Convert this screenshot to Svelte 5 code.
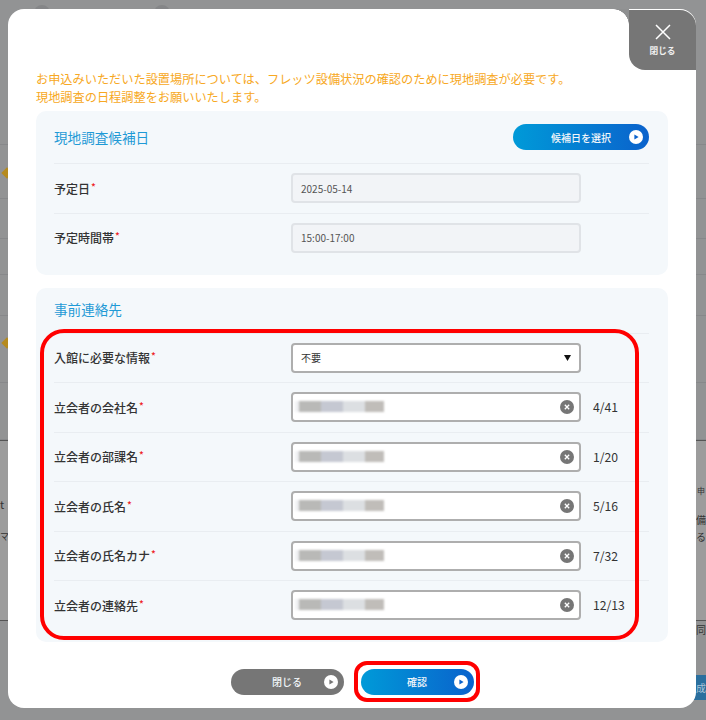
<script>
  const schedule = [
    { label: '予定日', value: '2025-05-14' },
    { label: '予定時間帯', value: '15:00-17:00' }
  ];
  const contacts = [
    { label: '立会者の会社名', count: '4/41' },
    { label: '立会者の部課名', count: '1/20' },
    { label: '立会者の氏名', count: '5/16' },
    { label: '立会者の氏名カナ', count: '7/32' },
    { label: '立会者の連絡先', count: '12/13' }
  ];
  const bgRows = [140, 54, 40, 36, 41, 67, 57];
</script>

{#snippet play(color)}
  <svg class="play" width="14" height="14" viewBox="0 0 14 14" aria-hidden="true">
    <circle cx="7" cy="7" r="7" fill="#fff" />
    <path d="M5.4 4.4v5.2L9.6 7z" fill={color} />
  </svg>
{/snippet}

<div class="backdrop" aria-hidden="true">
  <div class="bg-top">
    <span class="bump"></span>
    <span class="bump"></span>
  </div>
  {#each bgRows as h}
    <div class="bg-row" style="height: {h}px"></div>
  {/each}
  <div class="bg-lower"></div>
  <span class="diamond d1"></span>
  <span class="diamond d2"></span>
  <span class="frag" style="left: 0; top: 497px">t</span>
  <span class="frag" style="left: 0; top: 530px; font-size: 9px">マ:</span>
  <span class="frag" style="left: 697px; top: 484px; font-size: 8px">申</span>
  <span class="frag" style="left: 696px; top: 513px; font-size: 10px">備</span>
  <span class="frag" style="left: 696px; top: 530px; font-size: 10px">る</span>
  <span class="frag" style="left: 696px; top: 623px; font-size: 10px">同</span>
  <div class="bg-blue">成</div>
</div>

<div class="stage">
  <div class="modal">
    <button class="close-tab">
      <svg width="16" height="16" viewBox="0 0 16 16" aria-hidden="true">
        <path d="M1 1l14 14M15 1L1 15" stroke="#fff" stroke-width="1.5" fill="none" />
      </svg>
      <span>閉じる</span>
    </button>

    <p class="notice">
      お申込みいただいた設置場所については、フレッツ設備状況の確認のために現地調査が必要です。<br />
      現地調査の日程調整をお願いいたします。
    </p>

    <section class="panel">
      <div class="panel-head with-btn">
        <h2>現地調査候補日</h2>
        <button class="pill blue pick">
          <span></span>
          <span class="pill-text">候補日を選択</span>
          {@render play('#0a62cc')}
        </button>
      </div>
      {#each schedule as row}
        <div class="row">
          <div class="label">{row.label}<i>*</i></div>
          <div class="field readonly">{row.value}</div>
        </div>
      {/each}
    </section>

    <section class="panel second">
      <div class="panel-head">
        <h2>事前連絡先</h2>
      </div>
      <div class="row">
        <div class="label">入館に必要な情報<i>*</i></div>
        <div class="field select">
          <span>不要</span>
          <svg width="7" height="6" viewBox="0 0 7 6" aria-hidden="true"><path d="M0 0h7L3.5 6z" fill="#111" /></svg>
        </div>
      </div>
      {#each contacts as row}
        <div class="row">
          <div class="label">{row.label}<i>*</i></div>
          <div class="field">
            <div class="redact"><b></b><b></b><b></b><b></b></div>
            <svg class="clear" width="14" height="14" viewBox="0 0 14 14" aria-hidden="true">
              <circle cx="7" cy="7" r="7" fill="#767676" />
              <path d="M4.8 4.8l4.4 4.4M9.2 4.8L4.8 9.2" stroke="#fff" stroke-width="1.3" />
            </svg>
          </div>
          <div class="count">{row.count}</div>
        </div>
      {/each}
    </section>

    <div class="actions">
      <button class="pill gray">
        <span></span>
        <span class="pill-text">閉じる</span>
        {@render play('#767676')}
      </button>
      <button class="pill blue">
        <span></span>
        <span class="pill-text">確認</span>
        {@render play('#0a62cc')}
      </button>
    </div>

    <div class="mark mark-fields"></div>
    <div class="mark mark-confirm"></div>
  </div>
</div>

<style>
  :global(body) {
    margin: 0;
    background: #9a9a9b;
    font-family: "Noto Sans CJK JP", "Noto Sans", sans-serif;
  }
  .backdrop {
    position: absolute;
    inset: 0;
    height: 720px;
    overflow: hidden;
    background: #929394;
  }
  .bg-top {
    display: flex;
    gap: 104px;
    padding: 5px 0 0 34px;
    height: 0;
  }
  .bump {
    width: 16px;
    height: 16px;
    border-radius: 50%;
    background: #858688;
  }
  .bg-row {
    border-bottom: 1px solid #87888a;
    box-sizing: border-box;
  }
  .bg-lower {
    border-top: 1px solid #555;
    height: 179px;
    border-bottom: 1px solid #555;
    background: #9c9c9c;
  }
  .diamond {
    position: absolute;
    left: 3px;
    width: 8px;
    height: 8px;
    background: #b58a1e;
    transform: rotate(45deg);
  }
  .d1 { top: 169px; }
  .d2 { top: 339px; }
  .frag {
    position: absolute;
    font-size: 11px;
    line-height: 14px;
    color: #333;
    white-space: nowrap;
  }
  .bg-blue {
    position: absolute;
    left: 686px;
    top: 675px;
    width: 20px;
    height: 25px;
    padding-left: 10px;
    box-sizing: border-box;
    background: #2a6f9e;
    color: #a9c4d8;
    font-size: 10px;
    line-height: 25px;
    white-space: nowrap;
  }
  .stage {
    position: relative;
    padding: 9px 10px 12px 8px;
    height: 720px;
    box-sizing: border-box;
  }
  .modal {
    position: relative;
    height: 699px;
    box-sizing: border-box;
    padding-top: 61px;
    background: #fff;
    border-radius: 16px;
  }
  .close-tab {
    position: absolute;
    top: 1px;
    right: 0;
    width: 67px;
    height: 60px;
    display: flex;
    flex-direction: column;
    align-items: center;
    padding: 14px 0 0;
    border: none;
    border-radius: 0 16px 0 16px;
    background: #767676;
    color: #f0f0f0;
    font-family: inherit;
    font-size: 8.7px;
    font-weight: 700;
    line-height: 12px;
  }
  .close-tab span {
    margin-top: 5px;
  }
  .close-tab::before {
    content: "";
    position: absolute;
    left: -16px;
    top: -1px;
    width: 16px;
    height: 16px;
    background: radial-gradient(circle at 0 100%, #fff 15.5px, #8f9091 16px);
  }
  .notice {
    margin: 0 28px 5px;
    color: #f7a823;
    font-size: 12.2px;
    line-height: 18px;
    white-space: nowrap;
  }
  .panel {
    margin: 0 28px;
    padding: 0 19px 12.5px 18px;
    background: #f4f8fb;
    border-radius: 10px;
  }
  .second {
    margin-top: 13px;
    padding-bottom: 12px;
  }
  .panel-head {
    display: flex;
    justify-content: space-between;
    align-items: center;
    height: 45px;
    box-sizing: border-box;
    padding-bottom: 2px;
  }
  .with-btn {
    height: 52px;
    padding-bottom: 0;
  }
  h2 {
    margin: 0;
    color: #1f9ad6;
    font-size: 13.6px;
    font-weight: 400;
    line-height: 20px;
  }
  .row {
    display: grid;
    grid-template-columns: 237px 290px auto;
    align-items: center;
    height: 49.5px;
    box-sizing: border-box;
    border-top: 1px solid #e9edf1;
  }
  .label {
    color: #333;
    font-size: 12px;
    font-weight: 500;
    white-space: nowrap;
  }
  .label i {
    color: #ee1c25;
    font-style: normal;
    font-size: 10px;
    position: relative;
    top: -3px;
    margin-left: 1px;
  }
  .field {
    height: 30px;
    box-sizing: border-box;
    display: flex;
    align-items: center;
    justify-content: space-between;
    padding: 0 5px 0 2px;
    background: #fff;
    border: 2px solid #aeaeae;
    border-radius: 4px;
    color: #333;
    font-size: 10px;
  }
  .readonly {
    padding-left: 8px;
    background: #f2f4f7;
    border-color: #e0e3e7;
    color: #555;
  }
  .select {
    padding-left: 8px;
    padding-right: 8px;
  }
  .redact {
    display: flex;
    height: 11px;
    margin-top: -1px;
    padding-left: 4px;
    background: #f0f1f3;
    filter: blur(1px);
  }
  .redact b {
    display: block;
    width: 22px;
    background: #b9b9b7;
  }
  .redact b:nth-child(2) { background: #c5c8d2; }
  .redact b:nth-child(3) { background: #dcdfe2; }
  .redact b:nth-child(4) { width: 19px; background: #c0bdb9; }
  .count {
    margin-left: 12px;
    color: #333;
    font-size: 12.2px;
    white-space: nowrap;
  }
  .actions {
    display: flex;
    justify-content: center;
    gap: 17px;
    margin-top: 27px;
  }
  .pill {
    display: grid;
    grid-template-columns: 1fr auto 1fr;
    align-items: center;
    width: 113px;
    height: 26px;
    padding: 0 6px;
    box-sizing: border-box;
    border: none;
    border-radius: 13px;
    color: #f2f6fa;
    font-family: inherit;
    font-size: 10px;
    font-weight: 500;
  }
  .pill .play {
    justify-self: end;
  }
  .gray {
    background: #767676;
  }
  .blue {
    background: linear-gradient(90deg, #009ad8, #0a62cc);
  }
  .pick {
    width: 136px;
  }
  .pill-text {
    white-space: nowrap;
  }
  .mark {
    position: absolute;
    box-sizing: border-box;
    border: 4px solid #f00;
    pointer-events: none;
  }
  .mark-fields {
    left: 32px;
    top: 320px;
    width: 599px;
    height: 311px;
    border-radius: 24px;
  }
  .mark-confirm {
    left: 346px;
    top: 652px;
    width: 126px;
    height: 41px;
    border-radius: 13px;
  }
</style>
